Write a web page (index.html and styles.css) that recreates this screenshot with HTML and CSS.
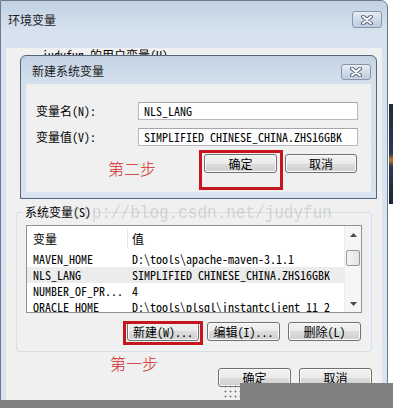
FILE: index.html
```html
<!DOCTYPE html>
<html lang="zh-CN">
<head>
  <meta charset="UTF-8">
  <meta name="viewport" content="width=device-width, initial-scale=1.0">
  <title>环境变量</title>
  <link rel="stylesheet" href="styles.css">
</head>
<body>
  <div class="screen">

    <!-- Outer window -->
    <div class="win">
      <div class="win-title">
        <span class="title-text">环境变量</span>
        <span class="close">
          <svg width="14" height="10" viewBox="0 0 14 10">
            <path d="M3 1.5 L11 8.5 M11 1.5 L3 8.5" stroke="#56647a" stroke-width="4" stroke-linecap="round"/>
            <path d="M3 1.5 L11 8.5 M11 1.5 L3 8.5" stroke="#fff" stroke-width="2" stroke-linecap="round"/>
          </svg>
        </span>
      </div>

      <div class="client">
        <div class="user-label">judyfun 的用户变量(U)</div>

        <fieldset class="group">
          <legend>系统变量(S)</legend>
          <div class="listbox">
            <div class="lv">
              <div class="lv-head">
                <div class="c1">变量</div>
                <div class="c2">值</div>
              </div>
              <div class="lv-row"><div class="c1">MAVEN_HOME</div><div class="c2">D:\tools\apache-maven-3.1.1</div></div>
              <div class="lv-row selected"><div class="c1">NLS_LANG</div><div class="c2">SIMPLIFIED CHINESE_CHINA.ZHS16GBK</div></div>
              <div class="lv-row"><div class="c1">NUMBER_OF_PR...</div><div class="c2">4</div></div>
              <div class="lv-row"><div class="c1">ORACLE_HOME</div><div class="c2">D:\tools\plsql\instantclient_11_2</div></div>
            </div>
            <div class="sb">
              <div class="sb-arrow">
                <svg width="7" height="4" viewBox="0 0 7 4"><path d="M0 4 L3.5 0 L7 4 Z" fill="#4a4a4a"/></svg>
              </div>
              <div class="sb-thumb"></div>
              <div class="sb-fill"></div>
              <div class="sb-arrow">
                <svg width="7" height="4" viewBox="0 0 7 4"><path d="M0 0 L7 0 L3.5 4 Z" fill="#4a4a4a"/></svg>
              </div>
            </div>
          </div>
          <div class="btn-row">
            <button class="btn w72">新建(W)...</button>
            <button class="btn w73">编辑(I)...</button>
            <button class="btn w73">删除(L)</button>
          </div>
        </fieldset>

        <div class="ok-row">
          <button class="btn w73">确定</button>
          <button class="btn w73">取消</button>
        </div>
      </div>
    </div>

    <!-- New variable dialog on top -->
    <div class="dialog">
      <div class="dlg-title">
        <span class="title-text">新建系统变量</span>
        <span class="close">
          <svg width="14" height="10" viewBox="0 0 14 10">
            <path d="M3 1.5 L11 8.5 M11 1.5 L3 8.5" stroke="#56647a" stroke-width="4" stroke-linecap="round"/>
            <path d="M3 1.5 L11 8.5 M11 1.5 L3 8.5" stroke="#fff" stroke-width="2" stroke-linecap="round"/>
          </svg>
        </span>
      </div>
      <div class="dlg-body">
        <div class="field">
          <label>变量名(N):</label>
          <div class="input">NLS_LANG</div>
        </div>
        <div class="field">
          <label>变量值(V):</label>
          <div class="input">SIMPLIFIED CHINESE_CHINA.ZHS16GBK</div>
        </div>
        <div class="dlg-btns">
          <button class="btn w73">确定</button>
          <button class="btn w72">取消</button>
        </div>
      </div>
    </div>

    <!-- Annotations -->
    <div class="watermark">http://blog.csdn.net/judyfun</div>
    <div class="step step2">第二步</div>
    <div class="step step1">第一步</div>
    <div class="mark mark-ok"></div>
    <div class="mark mark-new"></div>

    <div class="edge"></div>
    <div class="shade shade-right"></div>
    <div class="shade shade-bottom"></div>
    <div class="dots"></div>
  </div>
</body>
</html>
```

FILE: styles.css
```css
/* Reset */
* {
  margin: 0;
  padding: 0;
  box-sizing: border-box;
}

body {
  background: #fff;
  font-family: "Noto Sans Mono CJK SC", "Noto Sans CJK SC", "Liberation Mono", monospace;
  font-size: 12px;
  line-height: 14px;
  color: #000;
  overflow: hidden;
}

.screen {
  position: relative;
  width: 393px;
  height: 408px;
  overflow: hidden;
}

/* Outer window */
.win {
  width: 388px;
  height: 430px;
  border: 1px solid #6b7a8c;
  border-radius: 0 7px 0 0;
  background: linear-gradient(#c1d1e3, #d6e2ee 30px, #dae5f0);
  padding: 0 5px;
}

.win-title {
  height: 31px;
  display: flex;
  justify-content: space-between;
  align-items: flex-start;
  padding: 10px 0 0 2px;
}

.title-text {
  margin-top: 2px;
  color: #1b1b1b;
}

.close {
  width: 30px;
  height: 17px;
  border: 1px solid #8997a9;
  border-radius: 3px;
  background: linear-gradient(#e6edf5, #cfdae7 50%, #bfcde0);
  display: flex;
  align-items: center;
  justify-content: center;
}

.client {
  background: #f0f0f0;
  height: 400px;
  padding: 0 10px;
}

.user-label {
  margin: 16px 0 0 26px;
}

/* System variables group */
.group {
  margin-top: 143px;
  border: 1px solid #d5dfe5;
  border-radius: 3px;
  padding: 6px 9px 10px;
}

.group legend {
  margin-left: -3px;
  padding: 0 2px;
}

.listbox {
  height: 88px;
  display: flex;
  border: 1px solid #8e9196;
  background: #fff;
}

.lv {
  flex: 1;
  overflow: hidden;
}

.lv-head {
  height: 25px;
  display: flex;
  align-items: center;
}

.lv-head .c1 {
  border-right: 1px solid #e3e5e8;
  height: 19px;
  line-height: 19px;
}

.c1 {
  width: 101px;
  padding-left: 6px;
  white-space: nowrap;
}

.c2 {
  padding-left: 4px;
  white-space: nowrap;
}

.lv-row {
  height: 16px;
  line-height: 16px;
  display: flex;
}

.lv-row.selected {
  background: #ececec;
}

/* Scrollbar */
.sb {
  width: 17px;
  display: flex;
  flex-direction: column;
  background: #f6f6f6;
  border-left: 1px solid #ececec;
}

.sb-arrow {
  height: 17px;
  display: flex;
  align-items: center;
  justify-content: center;
}

.sb-thumb {
  margin: 7px 1px 0;
  height: 16px;
  border: 1px solid #979797;
  border-radius: 2px;
  background: linear-gradient(90deg, #f4f4f4, #e2e2e2);
}

.sb-fill {
  flex: 1;
}

/* Buttons */
.btn {
  height: 19px;
  border: 1px solid #707070;
  border-radius: 3px;
  background: linear-gradient(#f2f2f2, #ebebeb 50%, #dddddd 50%, #cfcfcf);
  box-shadow: inset 0 0 0 1px #fbfbfb;
  font-family: inherit;
  font-size: 12px;
  line-height: 16px;
  color: #000;
  text-align: center;
}

.w72 { width: 72px; }
.w73 { width: 73px; }

.btn-row {
  display: flex;
  justify-content: flex-end;
  gap: 8px;
  margin-top: 9px;
  padding-right: 1px;
}

.ok-row {
  display: flex;
  justify-content: flex-end;
  gap: 8px;
  margin-top: 16px;
}

/* New variable dialog */
.dialog {
  position: absolute;
  left: 20px;
  top: 55px;
  width: 357px;
  height: 144px;
  border: 1px solid #56657a;
  border-radius: 6px 6px 0 0;
  background: linear-gradient(#c3d2e3, #d5e1ed 28px, #d8e3ef);
  padding: 0 5px 6px;
  display: flex;
  flex-direction: column;
}

.dlg-title {
  height: 28px;
  display: flex;
  justify-content: space-between;
  align-items: flex-start;
  padding: 6px 0 0 6px;
}

.dlg-title .close {
  margin-top: 2px;
  height: 16px;
}

.dlg-body {
  flex: 1;
  background: #f0f0f0;
  padding: 18px 13px 0 10px;
}

.field {
  display: flex;
  align-items: center;
  margin-bottom: 8px;
}

.field label {
  width: 102px;
}

.input {
  width: 220px;
  height: 18px;
  line-height: 16px;
  border: 1px solid #b5b8be;
  border-top-color: #a3a6ad;
  background: #fff;
  padding-left: 5px;
  white-space: nowrap;
}

.dlg-btns {
  display: flex;
  justify-content: flex-end;
  gap: 8px;
  margin-top: 6px;
  padding-right: 1px;
}

/* Annotations drawn over the screenshot */
.watermark {
  position: absolute;
  left: 63px;
  top: 202px;
  font-family: "Liberation Mono", monospace;
  font-size: 16px;
  line-height: 18px;
  color: rgba(140, 140, 140, 0.3);
  transform: scaleY(1.2);
  transform-origin: top left;
}

.step {
  position: absolute;
  font-family: "Noto Sans CJK SC", sans-serif;
  font-size: 16px;
  line-height: 18px;
  color: #d22b2b;
  font-weight: 300;
}

.step2 {
  left: 108px;
  top: 159px;
}

.step1 {
  left: 110px;
  top: 354px;
}

.mark {
  position: absolute;
  border: 3px solid #c4161c;
}

.mark-ok {
  left: 199px;
  top: 150px;
  width: 84px;
  height: 40px;
}

.mark-new {
  left: 123px;
  top: 321px;
  width: 80px;
  height: 24px;
}

.edge {
  position: absolute;
  left: 389px;
  top: 104px;
  width: 4px;
  height: 100px;
  background: linear-gradient(#1d2b3c, #2a3a50 50%, #c7762e 56%, #2a3a50 62%, #1a2636);
}

.shade {
  position: absolute;
  background: #808080;
}

.shade-right {
  left: 240px;
  top: 383px;
  right: 0;
  bottom: 0;
}

.shade-bottom {
  left: 0;
  top: 400px;
  right: 0;
  bottom: 0;
}

.dots {
  position: absolute;
  left: 223px;
  top: 384px;
  width: 17px;
  height: 16px;
  background: radial-gradient(#7a7a7a 0.8px, transparent 1.2px) 0 0 / 5px 5px;
}
```
